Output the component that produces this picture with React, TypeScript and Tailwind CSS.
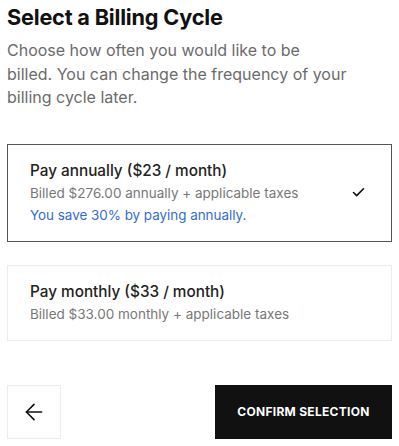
import { ArrowLeft, Check } from 'lucide-react'

const plans = [
  {
    title: 'Pay annually ($23 / month)',
    billed: 'Billed $276.00 annually + applicable taxes',
    note: 'You save 30% by paying annually.',
    selected: true,
  },
  {
    title: 'Pay monthly ($33 / month)',
    billed: 'Billed $33.00 monthly + applicable taxes',
    note: '',
    selected: false,
  },
]

export default function App() {
  return (
    <div className="min-h-screen bg-white px-[7px] pt-[3px] font-['Inter',sans-serif] w-[399px]">
      {/* Header */}
      <h1 className="text-[21.7px] leading-[28px] font-bold text-[#111] tracking-[-0.2px]">Select a Billing Cycle</h1>
      <p className="mt-[8px] max-w-[340px] text-[16px] leading-[23.5px] text-[#6b6b6b]">
        Choose how often you would like to be billed. You can change the frequency of your billing cycle later.
      </p>

      {/* Plans */}
      <div className="mt-[34px] flex flex-col gap-[23px]">
        {plans.map((plan) => (
          <div
            key={plan.title}
            className={`flex items-center justify-between pl-[22px] pr-[25px] py-[15px] border ${
              plan.selected ? 'border-[#555]' : 'border-[#ececec]'
            }`}
          >
            <div className="flex flex-col">
              <div className="text-[15.3px] leading-[22px] font-medium text-[#222]">{plan.title}</div>
              <div className="text-[13.5px] leading-[22px] text-[#777]">{plan.billed}</div>
              {plan.note && <div className="text-[13.4px] leading-[22px] text-[#2f6bd6]">{plan.note}</div>}
            </div>
            {plan.selected && <Check className="w-[15px] h-[15px] text-[#111]" strokeWidth={2.6} />}
          </div>
        ))}
      </div>

      {/* Actions */}
      <div className="mt-[44px] flex items-center justify-between">
        <button className="w-[54px] h-[54px] border border-[#ececec] flex items-center justify-center">
          <ArrowLeft className="w-[26px] h-[26px] text-[#111]" strokeWidth={1.5} />
        </button>
        <button className="w-[177px] h-[54px] bg-[#111] text-white text-[12px] font-bold tracking-[0.3px]">
          CONFIRM SELECTION
        </button>
      </div>
    </div>
  )
}
